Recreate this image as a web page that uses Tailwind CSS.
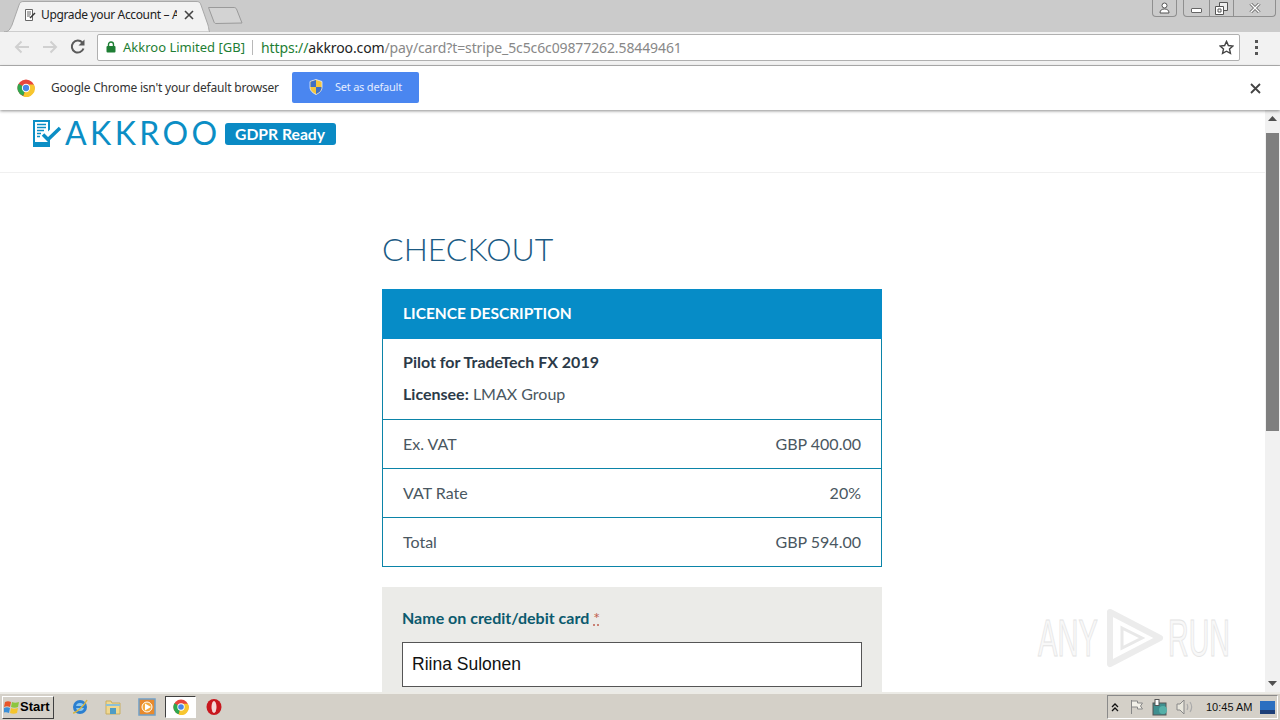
<!DOCTYPE html>
<html lang="en">

<head>
    <meta charset="UTF-8">
    <meta name="viewport" content="width=device-width, initial-scale=1.0">
    <script src="https://cdn.jsdelivr.net/npm/@tailwindcss/browser@4"></script>
    <title>Upgrade your Account - Akkroo</title>
</head>

<body class="bg-white overflow-hidden">
    <svg class="hidden">
        <symbol id="chrome-logo" viewBox="0 0 20 20">
            <circle cx="10" cy="10" r="9.5" fill="#e8453c" />
            <path d="M10 10 L1.800 5.200 A9.500 9.500 0 0 0 7 19 Z" fill="#2fa84f" />
            <path d="M10 10 L7 19.500 A9.500 9.500 0 0 0 18.600 6 L10 6 Z" fill="#f7c62f" />
            <circle cx="10" cy="10" r="4.600" fill="#fff" />
            <circle cx="10" cy="10" r="3.500" fill="#4a86e8" />
        </symbol>
    </svg>

    <div class="flex flex-col w-[1280px] h-[720px] overflow-hidden font-['Noto_Sans',sans-serif]">
        <!-- tab strip -->
        <div class="h-8 bg-[#cbcbcb] flex items-start relative shrink-0">
            <div class="relative w-[206px] h-7 mt-[1px] ml-1 shrink-0">
                <svg class="absolute inset-0" width="206" height="31" viewBox="0 0 206 31">
                    <path d="M0 31 C5 31 6 28 8 24 L15 4 C16 1 17 0.500 20 0.500 L192 0.500 C195 0.500 196 1 197 4 L204 24 C205 28 205 31 206 31 Z" fill="#f2f2f2" stroke="#a8a8a8" />
                </svg>
                <div class="relative flex items-center h-7 pl-[19px]">
                    <svg width="14" height="14" viewBox="0 0 14 14" class="shrink-0">
                        <path d="M2.500 1.500h7v11h-7z" fill="#fff" stroke="#666" />
                        <path d="M4 4h4M4 6h4M4 8h3" stroke="#666" />
                        <path d="M7 10l5-5" stroke="#333" stroke-width="1.500" />
                    </svg>
                    <span class="ml-[4px] text-[12px] tracking-[-0.35px] text-[#222] w-[136px] whitespace-nowrap overflow-hidden">Upgrade your Account – Akkroo</span>
                    <svg width="10" height="10" viewBox="0 0 10 10" class="ml-[7px] shrink-0">
                        <path d="M1 1l8 8M9 1l-8 8" stroke="#444" stroke-width="1.600" />
                    </svg>
                </div>
            </div>
            <svg width="38" height="20" viewBox="0 0 38 20" class="mt-[7px] -ml-[3px] shrink-0">
                <path d="M1.500 0.500 L27 0.500 C28 0.500 29 1 29.500 2 L35 16 L9 16.500 C8 16.500 7.500 16 7 15 Z" fill="#d3d3d3" stroke="#9a9a9a" />
            </svg>
            <div class="flex-1"></div>
            <!-- window controls -->
            <div class="flex h-[17px] mr-[4px]">
                <div class="w-[25px] h-[17px] border border-t-0 border-[#8f8f8f] rounded-b-[4px] flex items-center justify-center mr-[6px]">
                    <svg width="11" height="12" viewBox="0 0 11 12">
                        <circle cx="5.500" cy="3.500" r="2.500" fill="#fff" stroke="#555" />
                        <path d="M1 11c0-3 2-4 4.500-4S10 8 10 11z" fill="#fff" stroke="#555" />
                    </svg>
                </div>
                <div class="flex border border-t-0 border-[#8f8f8f] rounded-b-[4px]">
                    <div class="w-[25px] flex items-center justify-center">
                        <div class="w-[11px] h-[5px] mt-[4px] bg-white border border-[#666] rounded-[1px]"></div>
                    </div>
                    <div class="w-[25px] border-x border-[#8f8f8f] flex items-center justify-center">
                        <svg width="13" height="13" viewBox="0 0 13 13">
                            <path d="M4.500 0.500h8v8h-8z" fill="#eee" stroke="#555" />
                            <path d="M0.500 4.500h8v8h-8z" fill="#fff" stroke="#555" />
                            <path d="M3 7h3v3H3z" fill="none" stroke="#555" />
                        </svg>
                    </div>
                    <div class="w-[41px] flex items-center justify-center">
                        <svg width="12" height="10" viewBox="0 0 12 10">
                            <path d="M1.500 0.500l9 9M10.500 0.500l-9 9" stroke="#666" stroke-width="3" />
                            <path d="M1.500 0.500l9 9M10.500 0.500l-9 9" stroke="#fff" stroke-width="1.400" />
                        </svg>
                    </div>
                </div>
            </div>
        </div>

        <!-- toolbar -->
        <div class="h-[34px] pb-[3px] bg-[#f2f2f2] border-b border-[#b4b4b4] flex items-center shrink-0">
            <svg width="16" height="14" viewBox="0 0 16 14" class="ml-[14px] shrink-0">
                <path d="M15 7H2M7.500 1.500L2 7l5.500 5.500" fill="none" stroke="#d0d0d0" stroke-width="2" />
            </svg>
            <svg width="16" height="14" viewBox="0 0 16 14" class="ml-[12px] shrink-0">
                <path d="M1 7h13M8.500 1.500L14 7l-5.500 5.500" fill="none" stroke="#d0d0d0" stroke-width="2" />
            </svg>
            <svg width="16" height="16" viewBox="0 0 16 16" class="ml-[12px] shrink-0">
                <path d="M13.500 9.500A6 6 0 1 1 12.300 3.500" fill="none" stroke="#5a5a5a" stroke-width="2" />
                <path d="M14.500 0.500v6h-6z" fill="#5a5a5a" />
            </svg>
            <div class="ml-[11px] w-[1143px] h-[27px] bg-white border border-[#b0b0b0] rounded-[2px] flex items-center shrink-0">
                <svg width="10" height="12" viewBox="0 0 10 12" class="ml-[8px] shrink-0">
                    <path d="M2.500 5V3.500a2.500 2.500 0 0 1 5 0V5" fill="none" stroke="#1e7e34" stroke-width="1.400" />
                    <rect x="0.500" y="5" width="9" height="6.500" rx="1" fill="#1e7e34" />
                </svg>
                <span class="ml-[7px] mt-[1px] text-[13px] text-[#1e7e34] whitespace-nowrap">Akkroo Limited [GB]</span>
                <span class="ml-[7px] w-px h-[15px] bg-[#b8b8b8]"></span>
                <span class="ml-[8px] text-[14px] tracking-[-0.11px] text-[#888] whitespace-nowrap"><span class="text-[#1e7e34]">https://</span><span class="text-[#222]">akkroo.com</span>/pay/card?t=stripe_5c5c6c09877262.58449461</span>
                <div class="flex-1"></div>
                <svg width="15" height="15" viewBox="0 0 16 16" class="mr-[5px] shrink-0">
                    <path d="M8 1.500l2 4.400 4.800.500-3.600 3.200 1 4.700L8 12l-4.200 2.300 1-4.700L1.200 6.400 6 5.900z" fill="none" stroke="#444" stroke-width="1.500" />
                </svg>
            </div>
            <div class="ml-[15px] flex flex-col gap-[3px] shrink-0">
                <span class="w-[3px] h-[3px] bg-[#555]"></span>
                <span class="w-[3px] h-[3px] bg-[#555]"></span>
                <span class="w-[3px] h-[3px] bg-[#555]"></span>
            </div>
        </div>

        <!-- default browser infobar -->
        <div class="h-[44px] bg-white flex items-center shrink-0 relative z-10 shadow-[0_1px_3px_rgba(0,0,0,0.45)]">
            <svg width="18" height="18" class="ml-[17px] shrink-0">
                <use href="#chrome-logo" />
            </svg>
            <span class="ml-[16px] text-[12px] tracking-[-0.2px] text-[#333] whitespace-nowrap">Google Chrome isn't your default browser</span>
            <div class="ml-[13px] mb-[2px] w-[127px] h-[31px] bg-[#4a86f0] rounded-[2px] flex items-center shrink-0">
                <svg width="14" height="16" viewBox="0 0 14 16" class="ml-[17px] shrink-0">
                    <path d="M7 0.500L13 2.500V8c0 4-3 6-6 7.500C4 14 1 12 1 8V2.500z" fill="#f4c63d" stroke="#e8eefc" stroke-width="0.800" />
                    <path d="M7 1L1.500 2.800V8H7zM7 8v7c3-1.500 5.500-3 5.500-7z" fill="#3f6fc4" />
                </svg>
                <span class="ml-[12px] text-[11px] tracking-[-0.2px] text-[#e4ecff] whitespace-nowrap">Set as default</span>
            </div>
            <div class="flex-1"></div>
            <svg width="11" height="11" viewBox="0 0 11 11" class="mr-[19px] shrink-0">
                <path d="M1 1l9 9M10 1l-9 9" stroke="#444" stroke-width="1.800" />
            </svg>
        </div>

        <!-- page area -->
        <div class="flex-1 min-h-0 flex relative">
            <div class="flex-1 min-w-0 overflow-hidden font-['Lato',sans-serif]">
                <header class="h-[63px] border-b border-[#f0f0f0] flex items-start pl-[32px] pt-[9px]">
                    <svg width="30" height="28" viewBox="0 0 30 28" class="shrink-0">
                        <path d="M1 1h17v9.500l-2 2V3H3v20h13v-3l2-2v9H1z" fill="#0b8ec5" />
                        <path d="M1 24h17v4H1z" fill="#0b8ec5" />
                        <path d="M5 5.500h9M5 8.500h9M5 11.500h7M5 14.500h4M5 17.500h3" stroke="#0b8ec5" stroke-width="1.500" />
                        <path d="M11 15.500l5 5 12-11.500" fill="none" stroke="#0b8ec5" stroke-width="3.500" />
                    </svg>
                    <span class="ml-[3px] -mt-[3px] text-[32px] leading-[34px] text-[#0b8ec5] tracking-[3.4px] whitespace-nowrap">AKKROO</span>
                    <span class="ml-[4px] mt-[4px] h-[22px] w-[111px] bg-[#0a8ac4] rounded-[3px] text-white text-[15.700px] font-bold leading-[22px] text-center whitespace-nowrap">GDPR Ready</span>
                </header>

                <main class="w-[500px] ml-[382px]">
                    <h1 class="mt-[56px] text-[32px] leading-[40px] font-light text-[#1b5a83] whitespace-nowrap">CHECKOUT</h1>
                    <div class="mt-[20px] border border-[#0b84a8] border-t-0">
                        <div class="h-[50px] pb-[1px] -mx-px bg-[#068cc7] text-white text-[15.500px] font-bold px-[21px] flex items-center">LICENCE DESCRIPTION</div>
                        <div class="h-[80px] px-[20px] text-[16px] text-[#2b3a48]">
                            <p class="pt-[13px] leading-[20px] font-bold">Pilot for TradeTech FX 2019</p>
                            <p class="mt-[12px] leading-[20px]"><span class="font-bold">Licensee:</span> <span class="text-[#4a5761]">LMAX Group</span></p>
                        </div>
                        <div class="h-[49px] border-t border-[#0b84a8] px-[20px] text-[16px] text-[#4a5761] flex items-center justify-between"><span>Ex. VAT</span><span>GBP 400.00</span></div>
                        <div class="h-[49px] border-t border-[#0b84a8] px-[20px] text-[16px] text-[#4a5761] flex items-center justify-between"><span>VAT Rate</span><span>20%</span></div>
                        <div class="h-[49px] border-t border-[#0b84a8] px-[20px] text-[16px] text-[#4a5761] flex items-center justify-between"><span>Total</span><span>GBP 594.00</span></div>
                    </div>
                    <div class="mt-[20px] bg-[#ebebe8] px-[20px] pt-[21px] pb-[20px]">
                        <label class="block text-[16px] leading-[20px] font-bold text-[#0c5a6e]">Name on credit/debit card <span class="text-[#c0604f] font-normal underline decoration-dotted">*</span></label>
                        <div class="mt-[14px] h-[45px] bg-white border border-[#555] px-[9px] flex items-center text-[17.500px] text-[#111] font-['Liberation_Sans',sans-serif]">Riina Sulonen</div>
                    </div>
                </main>
            </div>

            <!-- scrollbar -->
            <div class="w-[15px] bg-[#f1f1f1] flex flex-col items-center shrink-0 relative z-0">
                <svg width="9" height="5" viewBox="0 0 9 5" class="mt-[6px]"><path d="M4.500 0L9 5H0z" fill="#505050" /></svg>
                <div class="mt-[12px] w-[13px] h-[298px] bg-[#7f7f7f]"></div>
                <div class="flex-1"></div>
                <svg width="9" height="5" viewBox="0 0 9 5" class="mb-[6px]"><path d="M0 0h9L4.500 5z" fill="#505050" /></svg>
            </div>

            <!-- watermark -->
            <div class="absolute left-[1038px] top-[498px] w-[196px] h-[60px] flex items-center text-[#f8f8f8] font-['Liberation_Sans',sans-serif] text-[52px] leading-[60px] [-webkit-text-stroke:1px_#e4e4e4]">
                <span class="w-[66px] whitespace-nowrap scale-x-[0.56] origin-left">ANY</span>
                <svg width="64" height="60" viewBox="0 0 64 60" class="shrink-0">
                    <path d="M6 4L56 30 6 56z" fill="none" stroke="#ececec" stroke-width="6" stroke-linejoin="round" />
                    <path d="M18 20L38 30 18 40z" fill="none" stroke="#e8e8e8" stroke-width="3" />
                </svg>
                <span class="whitespace-nowrap scale-x-[0.55] origin-left">RUN</span>
            </div>
        </div>

        <!-- taskbar -->
        <div class="h-7 bg-[#d4d0c8] border-t-2 border-[#ecebe6] flex items-center shrink-0 font-['Liberation_Sans',sans-serif]">
            <div class="ml-[2px] w-[52px] h-[23px] border border-t-white border-l-white border-r-[#404040] border-b-[#404040] flex items-center shrink-0">
                <svg width="17" height="16" viewBox="0 0 17 16" class="ml-[1px] shrink-0">
                    <path d="M1 3c2-1 4-1 6 0l-1 5c-2-1-4-1-6 0z" fill="#e8562a" />
                    <path d="M8 3c2 1 4 1 7 0l-1 5c-2 1-5 1-7 0z" fill="#8cc63f" />
                    <path d="M0 9c2-1 4-1 6 0l-1 5c-2-1-4-1-6 0z" fill="#3a8fd8" />
                    <path d="M7 9c2 1 4 1 7 0l-1 5c-2 1-5 1-7 0z" fill="#f5c52d" />
                </svg>
                <span class="-ml-[1px] text-[13px] font-bold text-black">Start</span>
            </div>
            <svg width="18" height="18" viewBox="0 0 18 18" class="ml-[17px] shrink-0">
                <circle cx="9" cy="9" r="5.500" fill="#8cc8f0" stroke="#2b7fd0" stroke-width="3" />
                <path d="M3 9h12" stroke="#2b7fd0" stroke-width="2" />
                <path d="M2 15C5 15 13 8 16 2" fill="none" stroke="#d8b640" stroke-width="1.500" />
            </svg>
            <svg width="18" height="18" viewBox="0 0 18 18" class="ml-[15px] shrink-0">
                <path d="M2 3h5l1 2h8v11H2z" fill="#f0d890" stroke="#c8ad60" />
                <path d="M2 7h14" stroke="#8cc0d8" stroke-width="2" />
                <path d="M6 10h6v6H6z" fill="#4f9cc4" />
            </svg>
            <svg width="18" height="18" viewBox="0 0 18 18" class="ml-[16px] shrink-0">
                <rect x="1" y="1" width="16" height="16" fill="#e88a2d" stroke="#6f9fc8" stroke-width="1.500" />
                <circle cx="9" cy="9" r="5" fill="#f5a93c" stroke="#fff" />
                <path d="M7 5.500l6 3.500-6 3.500z" fill="#fff" />
            </svg>
            <div class="ml-[9px] w-[31px] h-[22px] bg-white border border-t-[#404040] border-l-[#404040] border-r-white border-b-white flex items-center justify-center shrink-0">
                <svg width="16" height="16"><use href="#chrome-logo" /></svg>
            </div>
            <svg width="16" height="18" viewBox="0 0 16 18" class="ml-[10px] shrink-0">
                <ellipse cx="8" cy="9" rx="7.500" ry="8" fill="#c8171e" />
                <ellipse cx="8" cy="9" rx="2.500" ry="6" fill="#f4d8d8" />
            </svg>
            <div class="flex-1"></div>
            <!-- system tray -->
            <div class="w-[171px] h-[24px] mr-[2px] border border-t-[#8a8a8a] border-l-[#8a8a8a] border-r-white border-b-white flex items-center shrink-0">
                <svg width="8" height="9" viewBox="0 0 8 9" class="ml-[3px] shrink-0">
                    <path d="M1 4l3-3 3 3M1 8l3-3 3 3" fill="none" stroke="#111" stroke-width="1.300" />
                </svg>
                <svg width="16" height="16" viewBox="0 0 16 16" class="ml-[10px] shrink-0">
                    <path d="M2.500 1v14M2.500 2h6v2h5l-2 3 2 3H8.500V8h-6" fill="#f2f0e8" stroke="#888" />
                </svg>
                <svg width="17" height="17" viewBox="0 0 17 17" class="ml-[7px] shrink-0">
                    <rect x="1" y="4" width="13" height="12" fill="#3f8f8f" stroke="#555" />
                    <rect x="3" y="0.500" width="4" height="6" fill="#fff" stroke="#555" />
                    <circle cx="11" cy="11" r="4" fill="#55b0a8" />
                </svg>
                <svg width="18" height="16" viewBox="0 0 18 16" class="ml-[7px] shrink-0">
                    <path d="M1 5h3l4-4v14l-4-4H1z" fill="#e8e6dc" stroke="#888" />
                    <path d="M11 5c1 2 1 4 0 6M14 3c2 3 2 7 0 10" fill="none" stroke="#aaa" stroke-width="1.200" />
                </svg>
                <span class="ml-[12px] text-[11px] text-[#111] whitespace-nowrap">10:45 AM</span>
                <div class="flex-1"></div>
                <svg width="15" height="13" viewBox="0 0 15 13" class="mr-[2px] shrink-0">
                    <rect width="15" height="13" fill="#2b6fc0" />
                    <rect y="9" width="15" height="4" fill="#1d3f78" />
                </svg>
            </div>
        </div>
    </div>
</body>

</html>
